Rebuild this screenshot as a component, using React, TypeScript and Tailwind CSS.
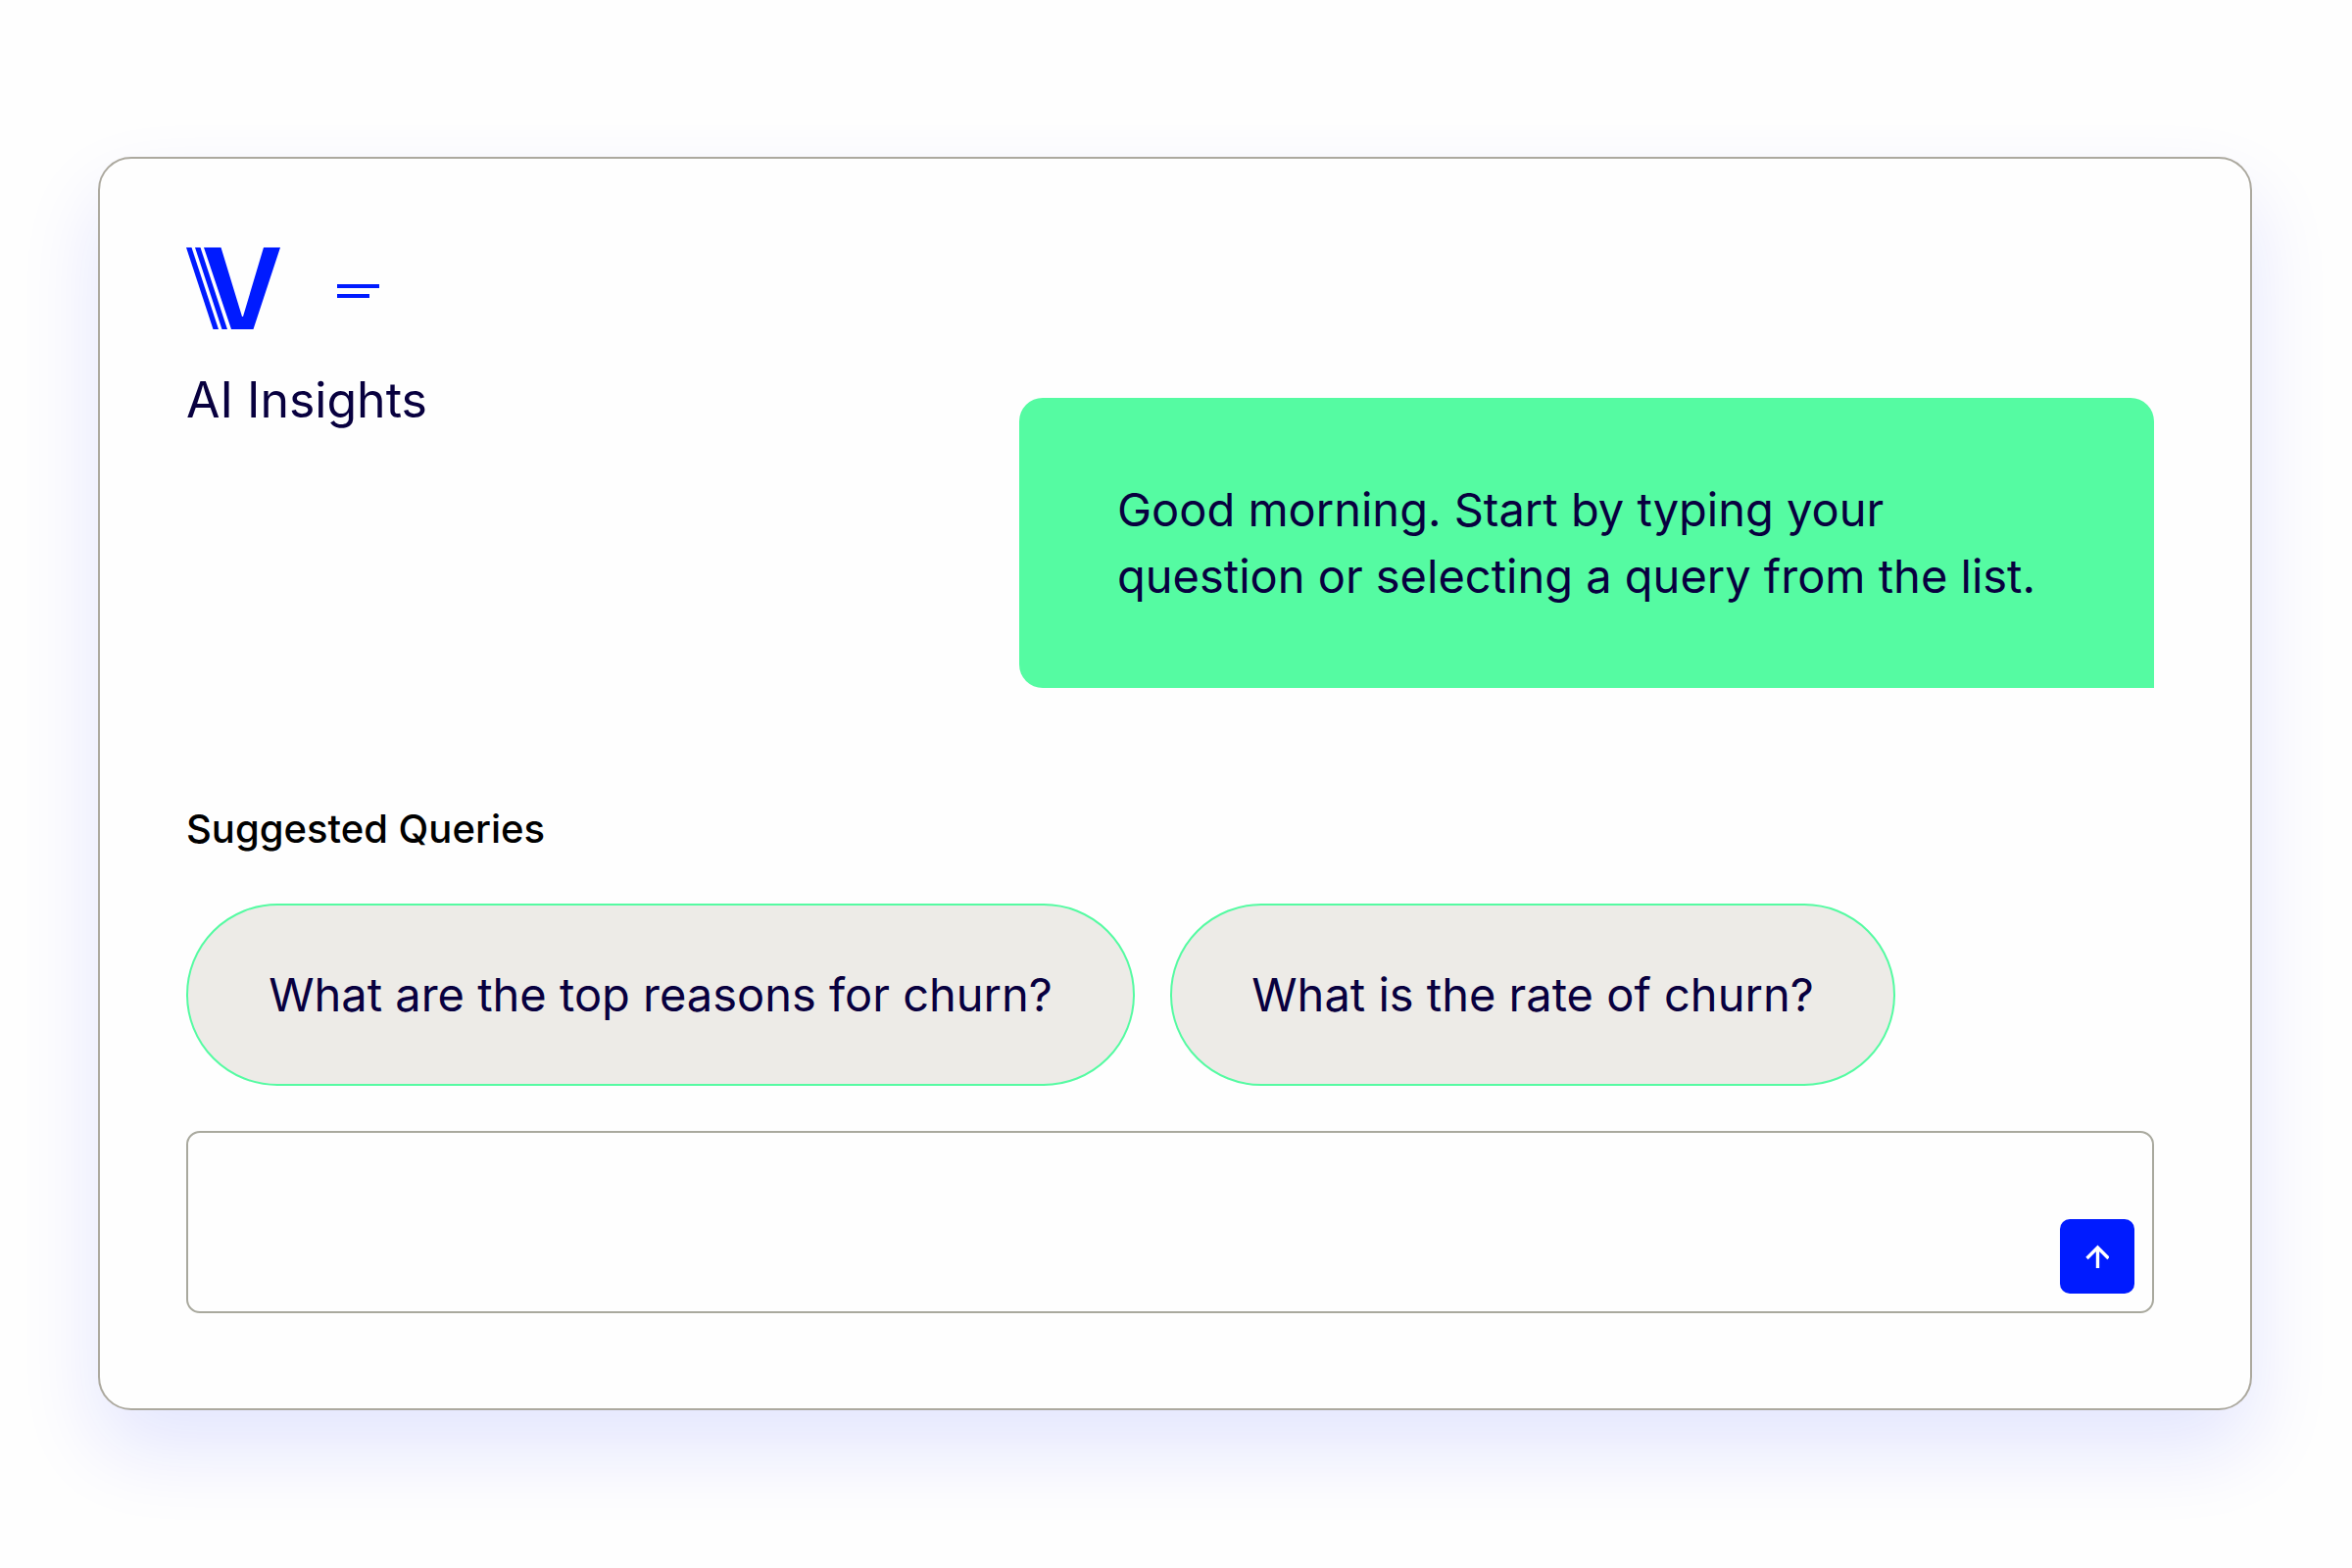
import { useState } from "react"

const queries = [
  { text: "What are the top reasons for churn?", width: "w-[968px]" },
  { text: "What is the rate of churn?", width: "w-[740px]" },
]

export default function App() {
  const [question, setQuestion] = useState("")

  return (
    <main className="min-h-screen bg-[#fefefe] pt-40 pr-[102px] pb-40 pl-[100px] font-['Inter',sans-serif] text-[#08003f]">
      <section className="rounded-[34px] border-2 border-[#aca99f] bg-[#fefefe] pt-[90px] pr-[98px] pb-[97px] pl-[88px] shadow-[0_40px_84px_rgba(0,27,255,0.11)]">
        <header className="flex items-start gap-[58px]">
          <Logo />
          <button type="button" aria-label="Menu" className="mt-[38px] flex flex-col gap-[6px]">
            <span className="h-1 w-[43px] bg-[#001bff]" />
            <span className="h-1 w-[33px] bg-[#001bff]" />
          </button>
        </header>

        <div className="mt-[38px] flex items-start justify-between">
          <h1 className="text-[50px] leading-[68px]">AI Insights</h1>
          <p className="mt-8 w-[1158px] rounded-3xl rounded-br-none bg-[#55fba2] px-[100px] py-20 text-[47px] leading-[68px]">
            Good morning. Start by typing your question or selecting a query from the list.
          </p>
        </div>

        <h2 className="mt-[114px] text-[40px] leading-[60px] font-medium text-black">Suggested Queries</h2>
        <div className="mt-[46px] flex gap-9">
          {queries.map((q) => (
            <button
              key={q.text}
              type="button"
              onClick={() => setQuestion(q.text)}
              className={`${q.width} h-[186px] rounded-full border-2 border-[#55fba2] bg-[#edebe7] text-[47px] leading-[68px] whitespace-nowrap`}
            >
              {q.text}
            </button>
          ))}
        </div>

        <form
          onSubmit={(e) => e.preventDefault()}
          className="mt-[46px] flex h-[186px] items-end gap-6 rounded-[14px] border-2 border-[#a9a99e] p-[18px]"
        >
          <textarea
            aria-label="Your question"
            value={question}
            onChange={(e) => setQuestion(e.target.value)}
            className="h-full flex-1 resize-none bg-transparent text-[40px] outline-none"
          />
          <button
            type="submit"
            aria-label="Send"
            className="flex size-[76px] items-center justify-center rounded-[10px] bg-[#001bff]"
          >
            <svg viewBox="0 0 24 24" className="size-6" fill="none" stroke="#fff" strokeWidth="3.4">
              <path d="M12.5 24.5V3M1.500 14 12.5 3l11 11" />
            </svg>
          </button>
        </form>
      </section>
    </main>
  )
}

function Logo() {
  return (
    <svg viewBox="0 0 96 84" className="h-[84px] w-24" fill="#001bff" role="img" aria-label="Logo">
      <path d="M0 .5h5.5L33 84h-5.500z" />
      <path d="M9 .5h5.5L42 84h-5.500z" />
      <path d="M18 .5h17.500L57 71h1L79 .5h17L68.500 84H46z" />
    </svg>
  )
}
